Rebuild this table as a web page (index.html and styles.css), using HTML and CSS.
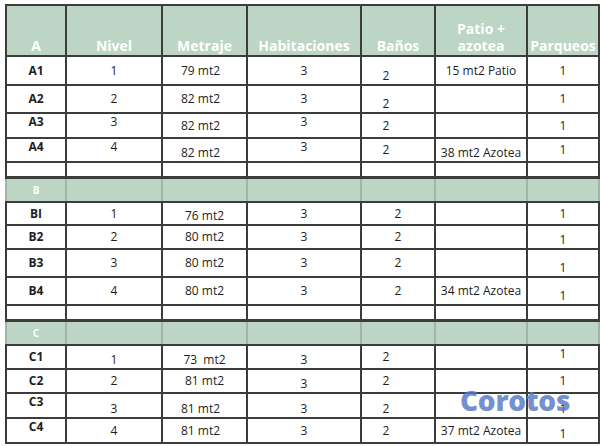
FILE: index.html
```html
<!DOCTYPE html>
<html lang="es">
<head>
<meta charset="utf-8">
<title>Tabla de unidades</title>
<link rel="stylesheet" href="styles.css">
</head>
<body>
<div class="page">
<table class="units">
<colgroup>
<col class="c1"><col class="c2"><col class="c3"><col class="c4"><col class="c5"><col class="c6"><col class="c7">
</colgroup>
<thead>
<tr class="head">
<th>A</th><th>Nivel</th><th>Metraje</th><th>Habitaciones</th><th>Baños</th><th>Patio +<br>azotea</th><th>Parqueos</th>
</tr>
</thead>
<tbody>
<tr class="r29"><td class="id">A1</td><td>1</td><td class="ml">79 mt2</td><td>3</td><td class="lo sl">2</td><td>15 mt2 Patio</td><td>1</td></tr>
<tr class="r28"><td class="id">A2</td><td>2</td><td class="ml">82 mt2</td><td>3</td><td class="lo sl">2</td><td></td><td>1</td></tr>
<tr class="r25"><td class="id hi">A3</td><td class="hi">3</td><td class="ml">82 mt2</td><td class="hi">3</td><td class="sl">2</td><td></td><td>1</td></tr>
<tr class="r24"><td class="id hi">A4</td><td class="hi">4</td><td class="lo ml">82 mt2</td><td class="hi">3</td><td class="sl">2</td><td class="lo">38 mt2 Azotea</td><td>1</td></tr>
<tr class="gap"><td></td><td></td><td></td><td></td><td></td><td></td><td></td></tr>
<tr class="sec"><td>B</td><td></td><td></td><td></td><td></td><td></td><td></td></tr>
<tr class="r23"><td class="id">BI</td><td>1</td><td class="lo">76 mt2</td><td>3</td><td>2</td><td></td><td>1</td></tr>
<tr class="r24"><td class="id">B2</td><td>2</td><td>80 mt2</td><td>3</td><td>2</td><td></td><td class="lo">1</td></tr>
<tr class="r28"><td class="id">B3</td><td>3</td><td>80 mt2</td><td>3</td><td>2</td><td></td><td class="lo">1</td></tr>
<tr class="r28"><td class="id">B4</td><td>4</td><td>80 mt2</td><td>3</td><td>2</td><td>34 mt2 Azotea</td><td class="lo">1</td></tr>
<tr class="gap"><td></td><td></td><td></td><td></td><td></td><td></td><td></td></tr>
<tr class="sec"><td>C</td><td></td><td></td><td></td><td></td><td></td><td></td></tr>
<tr class="r24"><td class="id">C1</td><td class="lo">1</td><td class="lo">73&nbsp; mt2</td><td class="lo">3</td><td class="sl">2</td><td></td><td class="hi">1</td></tr>
<tr class="r24"><td class="id">C2</td><td>2</td><td>81 mt2</td><td class="lo">3</td><td class="sl">2</td><td></td><td>1</td></tr>
<tr class="r25"><td class="id hi">C3</td><td class="lo">3</td><td class="lo ml">81 mt2</td><td class="lo">3</td><td class="lo sl">2</td><td></td><td class="lo">1</td></tr>
<tr class="r25"><td class="id hi">C4</td><td>4</td><td class="ml">81 mt2</td><td>3</td><td class="sl">2</td><td>37 mt2 Azotea</td><td class="lo">1</td></tr>
</tbody>
</table>
<div class="watermark">Corotos</div>
</div>
</body>
</html>
```
FILE: styles.css
```css
html, body {
  margin: 0;
  padding: 0;
  background: #ffffff;
}
body {
  font-family: "Open Sans", "Liberation Sans", sans-serif;
  color: #1e1e1e;
}
.page {
  position: relative;
  width: 600px;
  height: 446px;
  padding: 4px 0 0 5px;
  box-sizing: border-box;
}
.units {
  border-collapse: collapse;
  table-layout: fixed;
  width: 593px;
  font-size: 12px;
  line-height: 16px;
}
.c1 { width: 60px; }
.c2 { width: 96px; }
.c3 { width: 85px; }
.c4 { width: 114px; }
.c5 { width: 74px; }
.c6 { width: 92px; }
.c7 { width: 72px; }
.units th, .units td {
  border: 2px solid #3c3c3c;
  padding: 0;
  text-align: center;
  vertical-align: middle;
  white-space: nowrap;
  overflow: hidden;
}
.head th {
  height: 48px;
  background: #bcd5c4;
  color: #ffffff;
  font-size: 14px;
  font-weight: 700;
  line-height: 17px;
  vertical-align: bottom;
  padding-bottom: 1px;
}
.units td.id { font-weight: 700; }
.units td.lo { vertical-align: bottom; }
.units td.hi { vertical-align: top; }
.units td.sl { padding-right: 24px; }
.units td.ml { padding-right: 8px; }
.r23 td { height: 21px; }
.r24 td { height: 22px; }
.r25 td { height: 23px; }
.r28 td { height: 26px; }
.r29 td { height: 27px; }
.gap td {
  height: 13px;
  border-bottom-width: 3px;
}
.sec td {
  height: 22px;
  background: #bcd5c4;
  color: #ffffff;
  font-size: 10px;
  font-weight: 700;
  border-left-color: #9fb5a6;
  border-right-color: #9fb5a6;
}
.watermark {
  position: absolute;
  left: 460px;
  top: 381px;
  font-family: "Open Sans", "Liberation Sans", sans-serif;
  font-size: 28px;
  font-weight: 800;
  letter-spacing: -0.3px;
  color: rgba(84, 120, 196, 0.82);
}
```
